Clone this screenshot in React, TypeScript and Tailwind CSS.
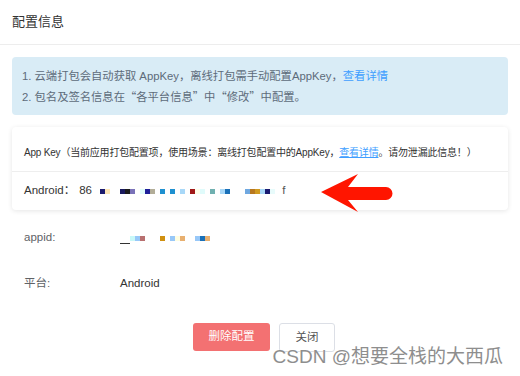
import React from "react";

const androidCells: (string | null)[] = [
  "#1c1c6e", "#fde5b5", null, null, "#1a1a5e", "#1c1c1c", "#7a72b8", null,
  "#e0fbfb", "#1f1f99", "#b2ad98", null, "#1e90d0", null, "#1e90d0", null,
  "#a8d8f8", null, "#a01818", "#fffde8", "#e0fbfb", null, "#70b0b0", null,
  "#a8d8f8", "#1a70b8", null, null, null, "#70a8e0", "#b87820", "#d09a20",
  "#a8d8f8", "#1a1a70", "#e8fbfb", null,
];

const appidCells: (string | null)[] = [
  "#c8f8f8", "#98c8f8", "#b87070", null, null, null, "#d09010", null,
  "#98c8f8", "#fffde0", "#e8b070", null, null, "#98c8f8", "#1a70b8", "#e8b070",
];

function Cells({ cells }: { cells: (string | null)[] }) {
  return (
    <span className="flex items-center">
      {cells.map((c, i) => (
        <span key={i} className="block w-[5px] h-[5px]" style={{ background: c ?? "transparent" }} />
      ))}
    </span>
  );
}

function Q({ children }: { children: React.ReactNode }) {
  return <span className="font-['Noto_Sans_CJK_SC',sans-serif]">{children}</span>;
}

export default function App() {
  return (
    <div className="relative w-[520px] h-[376px] bg-white overflow-hidden font-['Liberation_Sans','Noto_Sans_CJK_SC',sans-serif] text-[#333]">
      <div className="h-[45px] border-b border-[#ededed] flex items-center px-3 text-[13px] text-[#333]">
        配置信息
      </div>
      <div className="px-3">
        <div className="mt-[12px] h-[58px] rounded-[4px] bg-[#d9ecf6] px-[10px] flex flex-col justify-center text-[11.3px] leading-[20px] text-[#5d6b7a]">
          <div>
            1. 云端打包会自动获取 AppKey，离线打包需手动配置AppKey，<span className="text-[#409eff]">查看详情</span>
          </div>
          <div>
            2. 包名及签名信息在<Q>“</Q>各平台信息<Q>”</Q>中<Q>“</Q>修改<Q>”</Q>中配置。
          </div>
        </div>
        <div className="mt-[12px] rounded-[4px] bg-white shadow-[0_1px_5px_rgba(0,0,0,0.10)]">
          <div className="h-[44px] pt-[6px] px-3 flex items-center text-[10px] text-[#333] tracking-[-0.2px]">
            App Key（当前应用打包配置项，使用场景：离线打包配置中的AppKey，
            <span className="text-[#409eff] underline">查看详情</span>。请勿泄漏此信息！）
          </div>
          <div className="h-[39px] border-t border-[#eeeeee] px-3 flex items-center text-[11.5px] text-[#333]">
            <span>Android：</span>
            <span className="ml-[4px] w-[21px]">86</span>
            <Cells cells={androidCells} />
            <span className="ml-[2px] text-[#555]">f</span>
          </div>
        </div>
        <div className="mt-[5px] h-[46px] px-3 flex items-center text-[11.5px]">
          <span className="w-[96px] text-[#606266]">appid:</span>
          <span className="relative w-[10px] h-[12px]">
            <span className="absolute left-0 bottom-0 w-[10px] h-px bg-[#333]" />
          </span>
          <Cells cells={appidCells} />
        </div>
        <div className="h-[46px] px-3 flex items-center text-[11.5px]">
          <span className="w-[96px] text-[#606266]">平台:</span>
          <span className="text-[#333]">Android</span>
        </div>
        <div className="mt-[16px] pl-[8px] flex justify-center gap-[9px]">
          <div className="w-[77px] h-[28px] rounded-[3px] bg-[#f37172] text-white text-[11.5px] flex items-center justify-center">
            删除配置
          </div>
          <div className="w-[56px] h-[29px] rounded-[3px] border border-[#dcdfe6] bg-white text-[#555] text-[11.5px] flex items-center justify-center">
            关闭
          </div>
        </div>
      </div>
      <svg className="absolute left-[318px] top-[170px]" width="80" height="46" viewBox="0 0 80 46">
        <path d="M3 22 L40 4 L30 17 L68 17 A6 6 0 0 1 68 30 L30 30 L40 42 Z" fill="#ff1500" />
      </svg>
      <div className="absolute right-[17px] top-[344px] text-[19px] leading-[26px] text-[#8e8e8e] [text-shadow:0_0_1px_#fff] whitespace-nowrap">
        CSDN @想要全栈的大西瓜
      </div>
    </div>
  );
}
